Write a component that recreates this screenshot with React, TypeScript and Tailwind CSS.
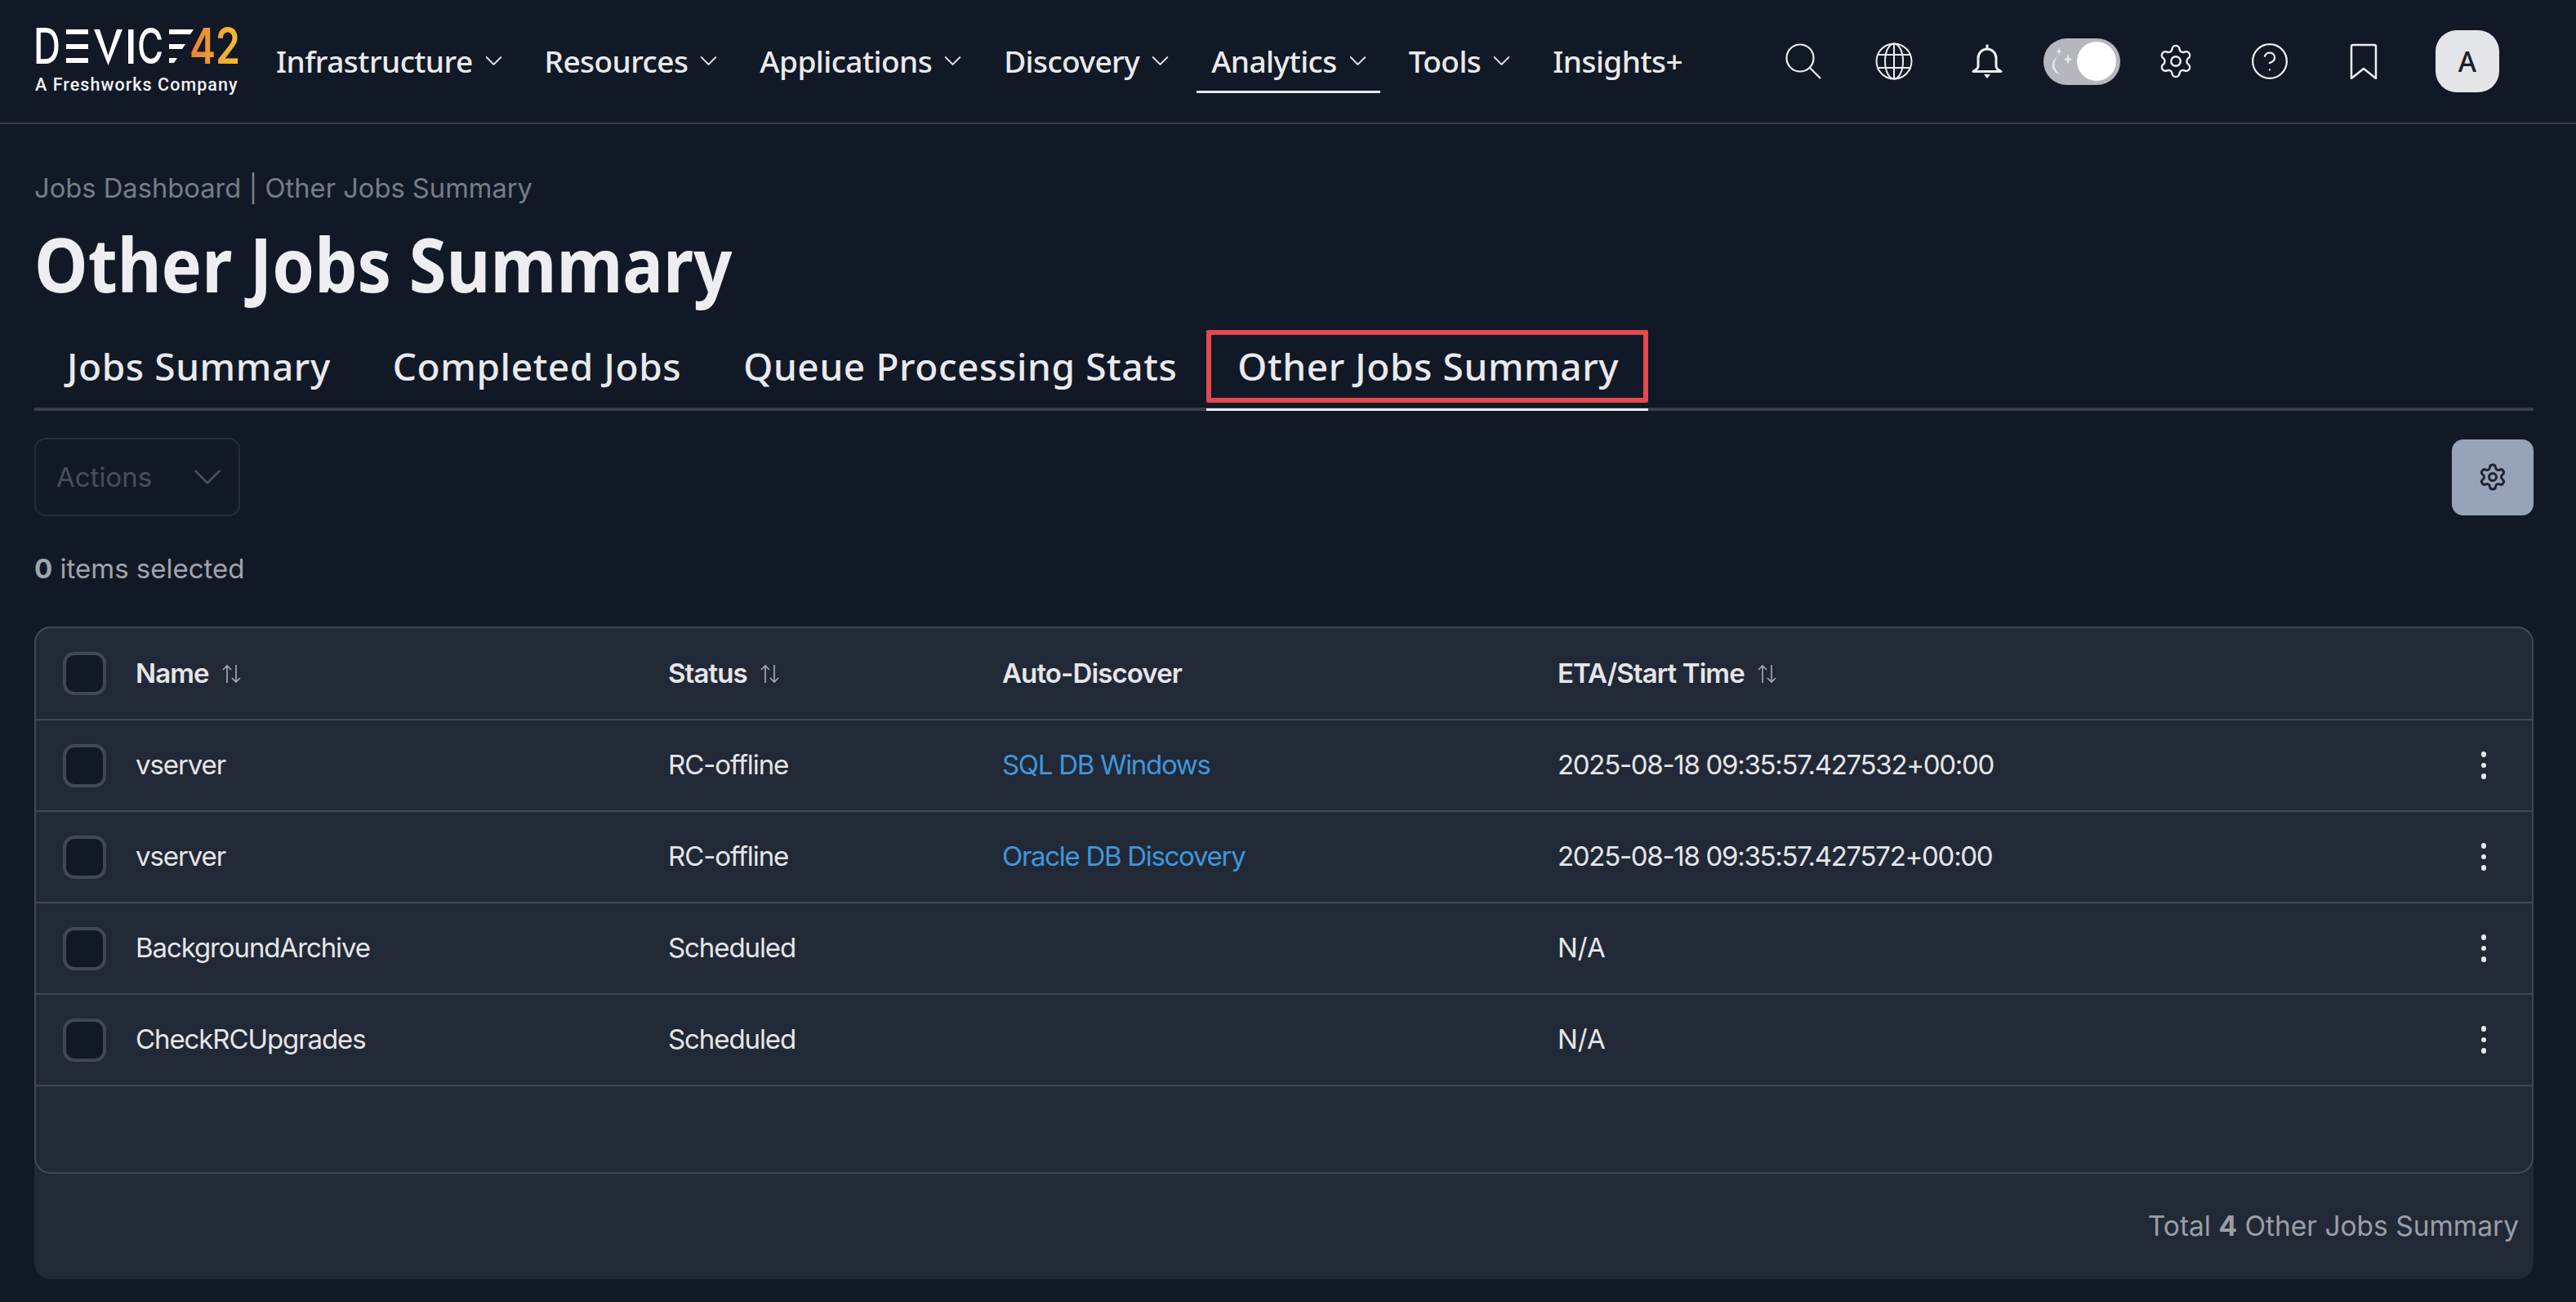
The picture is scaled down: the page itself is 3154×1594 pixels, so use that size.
import React from "react";
import { ChevronDown, Settings, CircleHelp } from "lucide-react";

const nav = [
  { label: "Infrastructure", chev: true },
  { label: "Resources", chev: true },
  { label: "Applications", chev: true },
  { label: "Discovery", chev: true },
  { label: "Analytics", chev: true },
  { label: "Tools", chev: true },
  { label: "Insights+", chev: false },
];

const rows = [
  { name: "vserver", status: "RC-offline", auto: "SQL DB Windows", eta: "2025-08-18 09:35:57.427532+00:00" },
  { name: "vserver", status: "RC-offline", auto: "Oracle DB Discovery", eta: "2025-08-18 09:35:57.427572+00:00" },
  { name: "BackgroundArchive", status: "Scheduled", auto: "", eta: "N/A" },
  { name: "CheckRCUpgrades", status: "Scheduled", auto: "", eta: "N/A" },
];

function Logo() {
  return (
    <div className="w-[252px]">
      <svg width="252" height="46" viewBox="43 42 252 46" className="block overflow-visible">
        <defs>
          <linearGradient id="g42" x1="233" x2="293" y1="0" y2="0" gradientUnits="userSpaceOnUse">
            <stop offset="0" stopColor="#e87f3a" />
            <stop offset="1" stopColor="#f6c02f" />
          </linearGradient>
        </defs>
        <g fill="#ffffff" fontFamily="Inter, sans-serif" fontWeight="500" fontSize="60">
          <text x="41" y="86" textLength="33" lengthAdjust="spacingAndGlyphs">D</text>
          <rect x="81" y="44" width="27" height="6" />
          <rect x="81" y="62" width="27" height="6" />
          <rect x="81" y="79" width="27" height="6" />
          <polygon points="115,44 122,44 132.5,76 143,44 150,44 132.5,88" />
          <rect x="157" y="44" width="6.5" height="42" />
          <text x="168" y="86" textLength="32" lengthAdjust="spacingAndGlyphs">C</text>
          <polygon points="207,44 237,44 233,50 207,50" />
          <polygon points="207,62 227,62 223,68 207,68" />
          <polygon points="207,79 217,79 213,85 207,85" />
        </g>
        <g fill="url(#g42)" fontFamily="Inter, sans-serif" fontWeight="600" fontSize="60">
          <text x="232" y="86" textLength="62" lengthAdjust="spacingAndGlyphs">42</text>
        </g>
      </svg>
      <div className="mt-[11px] whitespace-nowrap font-['Roboto',sans-serif] text-[21.5px] leading-[26px] font-medium tracking-[1.05px] text-[#f2f3f5]">
        A Freshworks Company
      </div>
    </div>
  );
}

function SearchIcon() {
  return (
    <svg width="44" height="44" viewBox="0 0 44 44" fill="none" stroke="#eceef1" strokeWidth="2.2">
      <circle cx="18" cy="18" r="16.5" />
      <line x1="29.5" y1="29.5" x2="43" y2="43" />
    </svg>
  );
}

function GlobeIcon() {
  return (
    <svg width="46" height="46" viewBox="0 0 46 46" fill="none" stroke="#eceef1" strokeWidth="2">
      <circle cx="23" cy="23" r="21.5" />
      <ellipse cx="23" cy="23" rx="11" ry="21.5" />
      <line x1="23" y1="1.5" x2="23" y2="44.5" />
      <line x1="3.5" y1="15" x2="42.5" y2="15" />
      <line x1="3.5" y1="31" x2="42.5" y2="31" />
    </svg>
  );
}

function BellIcon() {
  return (
    <svg width="40" height="44" viewBox="0 0 40 44" fill="none" stroke="#eceef1" strokeWidth="3">
      <path d="M20 1.5v4M9 28V18a11 11 0 0 1 22 0v10c0 3 2 4.5 6 6.5H3c4-2 6-3.5 6-6.5Z" strokeLinejoin="round" />
      <path d="M16 38h8l-4 5Z" fill="#eceef1" stroke="none" />
    </svg>
  );
}

function ThemeToggle() {
  return (
    <div className="flex h-[57px] w-[94px] items-center justify-end rounded-full bg-[#b4b7bd] pr-[5px]">
      <div className="relative h-[48px] w-[48px] rounded-full bg-white">
        <svg width="34" height="38" viewBox="0 0 34 38" className="absolute top-[5px] left-[-38px]" fill="#e6e8ec">
          <path d="M14 14a11 11 0 0 0 4 21A13 13 0 0 1 14 14Z" />
          <path d="M16 2l1 4 3 1-3 1-1 4-1-4-3-1 3-1Z" />
          <path d="M27 10l1.500 5 4 1.500-4 1.500-1.500 5-1.500-5-4-1.500 4-1.500Z" />
        </svg>
      </div>
    </div>
  );
}

function BookmarkIcon() {
  return (
    <svg width="34" height="44" viewBox="0 0 34 44" fill="none" stroke="#eceef1" strokeWidth="2.5">
      <path d="M2 43V4a2 2 0 0 1 2-2h26a2 2 0 0 1 2 2v39L17 31Z" strokeLinejoin="round" />
    </svg>
  );
}

function Sort() {
  return (
    <svg width="26" height="26" viewBox="0 0 26 26" fill="none" stroke="#a3a7ae" strokeWidth="1.7" className="ml-[14px]">
      <path d="M8 24V3M3 8l5-5 5 5" />
      <path d="M19 2v21M14 18l5 5 5-5" />
    </svg>
  );
}

function Checkbox() {
  return <div className="h-[53px] w-[53px] rounded-[14px] border-[4px] border-[#414756] bg-[#121926]" />;
}

function Kebab() {
  return (
    <div className="flex flex-col gap-[7px]">
      <span className="h-[6.500px] w-[6.500px] rounded-full bg-[#e6e8ec]" />
      <span className="h-[6.500px] w-[6.500px] rounded-full bg-[#e6e8ec]" />
      <span className="h-[6.500px] w-[6.500px] rounded-full bg-[#e6e8ec]" />
    </div>
  );
}

export default function App() {
  return (
    <div className="flex min-h-[1594px] w-full flex-col bg-[#121926] font-['Noto_Sans',sans-serif] text-[#e8eaee]">
      <header className="flex h-[152px] items-center border-b-2 border-[#3a3d4d] pl-[43px]">
        <Logo />
        <nav className="ml-[25px] flex h-[80px] items-center gap-[17px]">
          {nav.map((n) => (
            <div
              key={n.label}
              className={`mt-[2px] flex h-[76px] items-center border-b-[3px] pl-[18px] text-[37px] leading-none font-medium tracking-[-0.55px] whitespace-nowrap ${
                n.chev ? "pr-[10px]" : "pr-[18px]"
              } ${n.label === "Analytics" ? "border-[#e8eaee]" : "border-transparent"}`}
            >
              {n.label}
              {n.chev && <ChevronDown size={35} strokeWidth={1.4} className="ml-[8px]" />}
            </div>
          ))}
        </nav>
        <div className="ml-auto flex items-center pr-[94px]">
          <div className="flex w-[132px] justify-center"><SearchIcon /></div>
          <div className="flex w-[90px] justify-center"><GlobeIcon /></div>
          <div className="flex w-[138px] justify-center"><BellIcon /></div>
          <ThemeToggle />
          <div className="flex w-[136px] justify-center"><Settings size={46} strokeWidth={1.25} color="#eceef1" /></div>
          <div className="flex w-[94px] justify-center"><CircleHelp size={50} strokeWidth={1.1} color="#eceef1" /></div>
          <div className="flex w-[136px] justify-center"><BookmarkIcon /></div>
          <div className="ml-[20px] flex h-[76px] w-[78px] items-center justify-center rounded-[26px] bg-[#e4e5e9] text-[34px] font-medium text-[#1b1f27]">
            A
          </div>
        </div>
      </header>

      <main className="flex flex-1 flex-col pr-[52px] pb-[28px] pl-[42px]">
        <div className="mt-[58px] font-['Inter',sans-serif] text-[32.700px] leading-[40px] text-[#767d89]">
          Jobs Dashboard | Other Jobs Summary
        </div>
        <h1 className="mt-[18px] origin-left scale-x-[0.902] text-[92px] leading-[110px] font-bold whitespace-nowrap text-[#eceef1]">
          Other Jobs Summary
        </h1>

        <div className="mt-[26px] flex h-[99px] border-b-[4px] border-[#3a3d4d]">
          <div className="flex h-[89px] items-center pr-[38px] pl-[40px] text-[46px] font-medium tracking-[0.6px] whitespace-nowrap">Jobs Summary</div>
          <div className="flex h-[89px] items-center px-[38px] text-[46px] font-medium tracking-[0.6px] whitespace-nowrap">Completed Jobs</div>
          <div className="flex h-[89px] items-center pr-[36px] pl-[38px] text-[46px] font-medium tracking-[0.6px] whitespace-nowrap">Queue Processing Stats</div>
          <div className="h-[99px] border-b-[3px] border-[#e8eaee]">
            <div className="flex h-[89px] items-center rounded-[2px] border-[6px] border-[#e5484d] pr-[30px] pl-[32px] text-[46px] font-medium tracking-[0.6px] whitespace-nowrap">
              Other Jobs Summary
            </div>
          </div>
        </div>

        <div className="mt-[33px] flex items-center justify-between">
          <div className="flex h-[96px] w-[252px] items-center justify-between rounded-[14px] border-2 border-[#262b38] pr-[9px] pl-[25px] font-['Inter',sans-serif] text-[33px] text-[#4a4e5b]">
            <span className="pt-[2px]">Actions</span>
            <ChevronDown size={58} strokeWidth={1.1} />
          </div>
          <div className="flex h-[93px] w-[100px] items-center justify-center rounded-[14px] bg-[#97a3b6]">
            <Settings size={36} strokeWidth={2} color="#1f2530" />
          </div>
        </div>

        <div className="mt-[44px] font-['Inter',sans-serif] text-[33px] leading-[40px] text-[#a0a4ab]">
          <b className="font-bold">0</b> items selected
        </div>

        <section className="mt-[51px] flex flex-1 flex-col rounded-[20px] bg-[#222936] font-['Inter',sans-serif] text-[33px] tracking-[-0.9px] text-[#e4e6ea]">
          <div className="flex h-[670px] flex-col rounded-[20px] border-2 border-[#414756]">
            <div className="grid h-[113px] grid-cols-[122px_652px_409px_680px_1fr] items-center border-b-2 border-[#414756] font-semibold">
              <div className="pl-[33px]"><Checkbox /></div>
              <div className="flex items-center">Name<Sort /></div>
              <div className="flex items-center">Status<Sort /></div>
              <div>Auto-Discover</div>
              <div className="flex items-center">ETA/Start Time<Sort /></div>
            </div>
            {rows.map((r, i) => (
              <div key={i} className="grid h-[112px] grid-cols-[122px_652px_409px_680px_1fr_auto] items-center border-b-2 border-[#414756] tracking-[-1.1px]">
                <div className="pl-[33px]"><Checkbox /></div>
                <div>{r.name}</div>
                <div>{r.status}</div>
                <div className="tracking-[-1.300px] text-[#3f97dd]">{r.auto}</div>
                <div className={r.eta === "N/A" ? "tracking-normal" : "tracking-[-1.3px]"}>{r.eta}</div>
                <div className="pr-[56px]"><Kebab /></div>
              </div>
            ))}
          </div>
          <div className="flex flex-1 items-center justify-end pr-[18px] text-[33.500px] tracking-normal text-[#9a9ea6]">
            <span>Total <b className="font-bold">4</b> Other Jobs Summary</span>
          </div>
        </section>
      </main>
    </div>
  );
}
